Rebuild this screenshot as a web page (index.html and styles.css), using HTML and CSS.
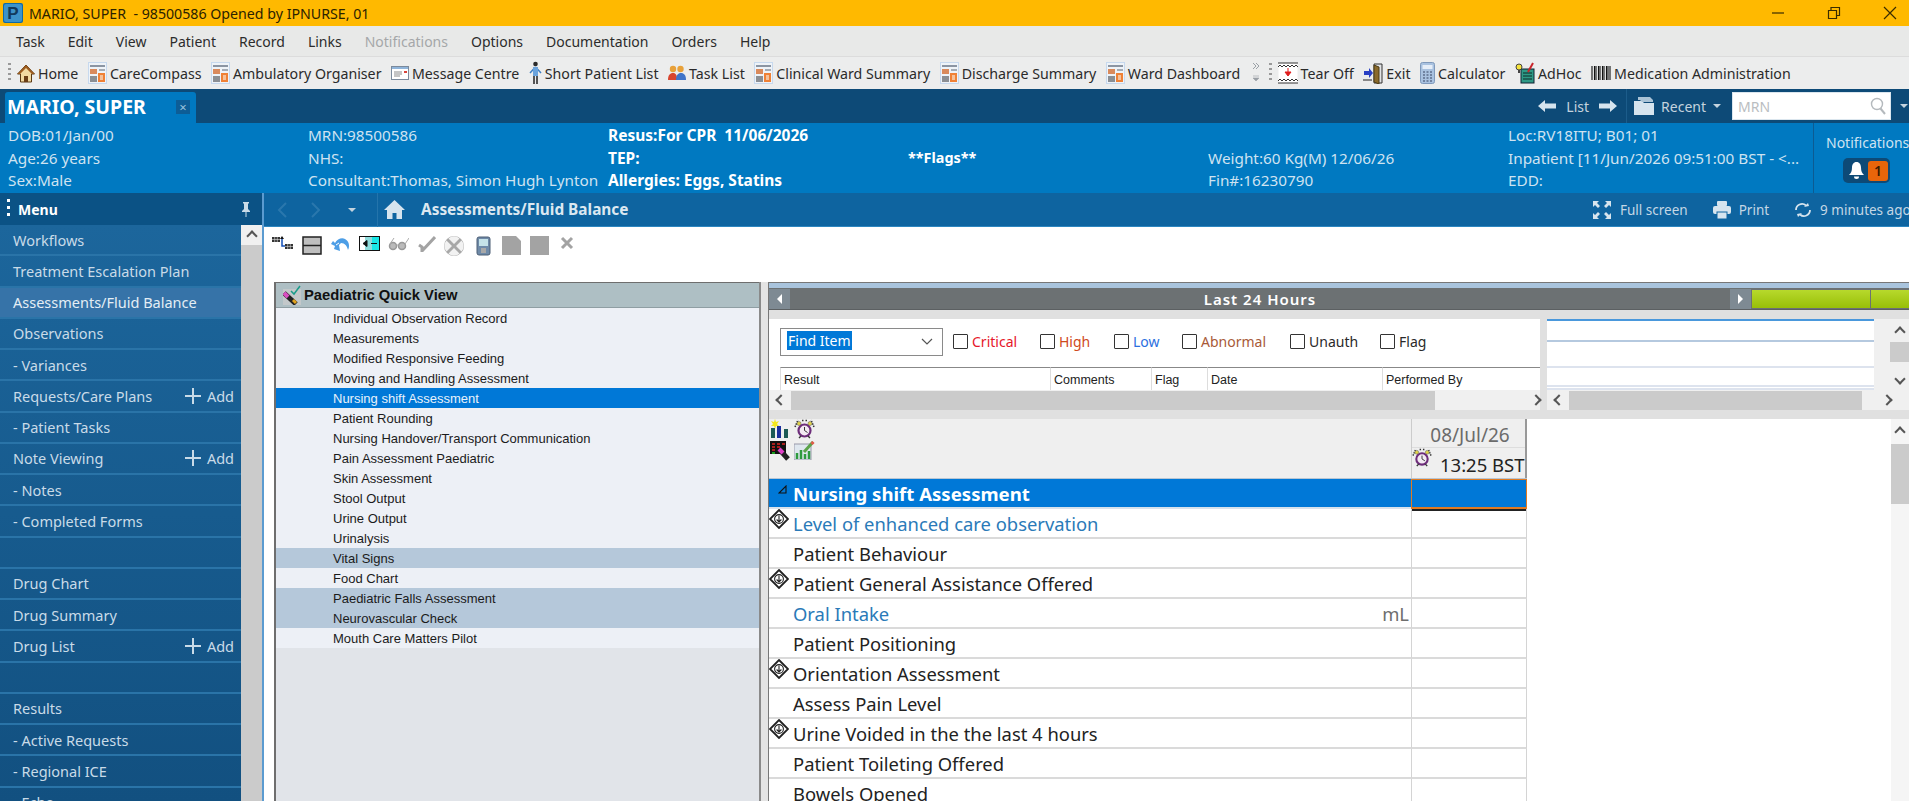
FILE: index.html
```html
<!DOCTYPE html>
<html lang="en">
<head>
  <meta charset="UTF-8" />
  <title>MARIO, SUPER - 98500586</title>
  <link rel="stylesheet" href="styles.css">
</head>
<body>
  <svg class="defs" width="0" height="0">
    <symbol id="report" viewBox="0 0 19 22">
      <rect width="19" height="22" fill="#c7d9ee"/>
      <rect x="1" y="1" width="17" height="20" fill="#eef3f8"/>
      <rect x="2" y="3" width="15" height="2" fill="#8b95a3"/>
      <rect x="2" y="7" width="7" height="5" fill="#d98a5c"/>
      <rect x="11" y="7" width="6" height="2" fill="#a5acb5"/>
      <rect x="2" y="14" width="7" height="6" fill="#8b8f94"/>
      <rect x="10" y="11" width="7" height="9" fill="#ef8136"/>
      <rect x="12" y="13" width="3" height="5" fill="#f4c19b"/>
    </symbol>
    <symbol id="diamond" viewBox="0 0 20 20">
      <path d="M10 1 19 10 10 19 1 10Z" fill="#fff" stroke="#222" stroke-width="1.8"/>
      <circle cx="10" cy="10" r="4.4" fill="none" stroke="#222" stroke-width="1.1"/>
      <path d="M10 6.500v6.500M7.600 10.500 10 13l2.400-2.500" fill="none" stroke="#222" stroke-width="1.100"/>
    </symbol>
    <symbol id="clock" viewBox="0 0 21 20">
      <circle cx="10.500" cy="11.500" r="6" fill="#f3eaf3" stroke="#6d2d7a" stroke-width="2.200"/>
      <path d="M10.500 8v3.500l3 2" fill="none" stroke="#333"/>
      <path d="M1 8 4 1M20 8 17 1M8 1.500h1.500M11.500 1.500H13" stroke="#333" stroke-width="1.500" stroke-dasharray="1.500 1"/>
      <circle cx="5" cy="4.500" r="2" fill="#e2d34a" stroke="#555" stroke-width=".5"/>
      <circle cx="16" cy="4.500" r="2" fill="#e2d34a" stroke="#555" stroke-width=".5"/>
      <path d="M5 19l2-2M16 19l-2-2" stroke="#333" stroke-width="1.400"/>
    </symbol>
    <symbol id="plus" viewBox="0 0 16 18">
      <path d="M8 1v16M0 9h16" stroke="#c9dbe8" stroke-width="2"/>
    </symbol>
  </svg>

  <div class="titlebar">
    <svg class="app-logo" viewBox="0 0 20 20" width="20" height="20">
      <rect width="20" height="20" rx="2" fill="#0d6aa8"/>
      <rect x="1" y="1" width="18" height="18" rx="2" fill="#3d93c9"/>
      <text x="10" y="16" text-anchor="middle" class="app-logo-letter">P</text>
    </svg>
    <span class="title-text">MARIO, SUPER  - 98500586 Opened by IPNURSE, 01</span>
    <div class="window-btns">
      <svg width="14" height="14" viewBox="0 0 14 14"><path d="M1 7h12" stroke="#3a2c00" stroke-width="1.200"/></svg>
      <svg width="14" height="14" viewBox="0 0 14 14"><path d="M1.500 4.500h8v8h-8zM4 4.500v-3h8.500v8h-3" fill="none" stroke="#3a2c00" stroke-width="1.200"/></svg>
      <svg width="14" height="14" viewBox="0 0 14 14"><path d="M1 1l12 12M13 1 1 13" stroke="#3a2c00" stroke-width="1.200"/></svg>
    </div>
  </div>

  <div class="menubar">
    <span>Task</span><span>Edit</span><span>View</span><span>Patient</span><span>Record</span><span>Links</span>
    <span class="disabled">Notifications</span><span>Options</span><span>Documentation</span><span>Orders</span><span>Help</span>
  </div>

  <div class="toolbar">
    <div class="grip"></div>
    <div class="tool">
      <svg width="18" height="19" viewBox="0 0 18 19"><path d="M9 1 0.500 10h3v8h11v-8h3z" fill="#f2d9a0" stroke="#5b3a12"/><path d="M9 1 0.500 10h2.500L9 4l6 6h2.500z" fill="#9c5a1d"/><rect x="7" y="12" width="4" height="6" fill="#6b3f16"/></svg>
      Home
    </div>
    <div class="tool"><svg width="19" height="22"><use href="#report"/></svg>CareCompass</div>
    <div class="tool"><svg width="19" height="22"><use href="#report"/></svg>Ambulatory Organiser</div>
    <div class="tool">
      <svg width="18" height="14" viewBox="0 0 18 14"><rect x=".5" y=".5" width="17" height="13" fill="#fff" stroke="#7b8a9c"/><rect x="1" y="1" width="16" height="2" fill="#8fb4da"/><path d="M3 6h8M3 8h8M3 10h6" stroke="#8b8b8b"/><rect x="13" y="5" width="3" height="2" fill="#d9433a"/></svg>
      Message Centre
    </div>
    <div class="tool">
      <svg width="13" height="24" viewBox="0 0 13 24"><circle cx="6.500" cy="3" r="2.300" fill="#2a2a2a"/><path d="M6.500 6 1 12M6.500 6l5.500 6" stroke="#3d7fc4" stroke-width="1.500"/><path d="M4 6h5v9H4z" fill="#6aa3dc"/><path d="M5 15v8M8 15v8" stroke="#222" stroke-width="1.500"/></svg>
      Short Patient List
    </div>
    <div class="tool">
      <svg width="18" height="16" viewBox="0 0 18 16"><circle cx="5" cy="4" r="3.200" fill="#e8a13a"/><circle cx="12.500" cy="4" r="3.200" fill="#e8a13a"/><path d="M0 15c0-5 2-7 5-7s4 2 4 7z" fill="#d8452f"/><path d="M8 15c0-5 2-7 5-7s5 2 5 7z" fill="#3f74c9"/></svg>
      Task List
    </div>
    <div class="tool"><svg width="19" height="22"><use href="#report"/></svg>Clinical Ward Summary</div>
    <div class="tool"><svg width="19" height="22"><use href="#report"/></svg>Discharge Summary</div>
    <div class="tool"><svg width="19" height="22"><use href="#report"/></svg>Ward Dashboard</div>
    <div class="overflow-chevrons">
      <svg width="8" height="22" viewBox="0 0 8 22"><path d="M1 1l3 3-3 3M4 1l3 3-3 3" fill="none" stroke="#9aa0a6"/><path d="M1 14h6M1 16l3 3 3-3z" fill="#9aa0a6" stroke="#9aa0a6" stroke-width=".6"/></svg>
    </div>
    <div class="grip grip-mid"></div>
    <div class="tool">
      <svg width="20" height="22" viewBox="0 0 20 22"><rect x=".5" y="1" width="19" height="20" fill="#fff"/><path d="M0 1h20M0 5l2-2 2 2 2-2 2 2 2-2 2 2 2-2 2 2 2-2 2 2M0 19l2-2 2 2 2-2 2 2 2-2 2 2 2-2 2 2 2-2 2 2M0 21h20" fill="none" stroke="#333"/><path d="M10 6v6M7 10l3 4 3-4z" fill="#e01c1c" stroke="#e01c1c"/></svg>
      Tear Off
    </div>
    <div class="tool">
      <svg width="20" height="22" viewBox="0 0 20 22"><path d="M11 2h8v19h-8z" fill="#e2e4e6" stroke="#333"/><path d="M11 3l5 2v17l-5-2z" fill="#8a6a2b" stroke="#4a3a14"/><path d="M1 9h5V6l4 5-4 5v-3H1z" fill="#2940c4"/><path d="M0 18h9" stroke="#222"/></svg>
      Exit
    </div>
    <div class="tool">
      <svg width="15" height="22" viewBox="0 0 15 22"><rect x=".5" y=".5" width="14" height="21" rx="2" fill="#a9c2e0" stroke="#7f99bb"/><rect x="2.500" y="3" width="10" height="4" fill="#e6eef8"/><path d="M3 10h2M6.500 10h2M10 10h2M3 13h2M6.500 13h2M10 13h2M3 16h2M6.500 16h2M10 16h2M3 19h2M6.500 19h2M10 19h2" stroke="#5d6f8c" stroke-width="1.600"/></svg>
      Calculator
    </div>
    <div class="tool">
      <svg width="20" height="22" viewBox="0 0 20 22"><rect x="6" y="7" width="13" height="14" fill="#2f9a86" stroke="#123"/><path d="M8 11h9M8 14h9M8 17h9" stroke="#0c2b28"/><circle cx="4" cy="5" r="3" fill="#f5e33c" stroke="#444"/><path d="M3 8h2v3H3z" fill="#444"/><path d="M18 1l-5 9" stroke="#c8252c" stroke-width="2"/></svg>
      AdHoc
    </div>
    <div class="tool">
      <svg width="20" height="14" viewBox="0 0 20 14"><path d="M1 0v14M3.500 0v14M5 0v14M7.500 0v14M9 0v14M11.500 0v14M13 0v14M15.500 0v14M17 0v14M19 0v14" stroke="#111" stroke-width="1.100"/></svg>
      Medication Administration
    </div>
  </div>

  <div class="tabbar">
    <div class="patient-tab">
      <span class="patient-name">MARIO, SUPER</span>
      <span class="tab-close">×</span>
    </div>
    <div class="tab-tools">
      <svg width="18" height="14" viewBox="0 0 18 14"><path d="M0 7l7-6v3.500h11v5H7V13z" fill="#d6e4ee"/></svg>
      <span class="tab-list">List</span>
      <svg width="18" height="14" viewBox="0 0 18 14"><path d="M18 7l-7-6v3.500H0v5h11V13z" fill="#d6e4ee"/></svg>
      <div class="tab-sep"></div>
      <svg width="21" height="20" viewBox="0 0 21 20"><path d="M0 5h8l2 2h10v12H0z" fill="#d6e4ee"/><path d="M4 1h12l3 3v2H8L6 4H4z" fill="#aac3d6"/></svg>
      <span class="tab-recent">Recent</span>
      <span class="caret"></span>
      <div class="search-box">
        <span>MRN</span>
        <svg width="16" height="18" viewBox="0 0 16 18"><circle cx="7" cy="7" r="5.500" fill="none" stroke="#b4b9bd" stroke-width="1.400"/><path d="M10.500 11.500 15 17" stroke="#b4b9bd" stroke-width="2"/></svg>
      </div>
      <span class="caret caret-end"></span>
    </div>
  </div>

  <div class="banner">
    <div class="banner-grid">
      <div>DOB:01/Jan/00</div><div>MRN:98500586</div><div class="strong">Resus:For CPR  11/06/2026</div><div></div><div></div><div>Loc:RV18ITU; B01; 01</div>
      <div>Age:26 years</div><div>NHS:</div><div class="strong">TEP:</div><div class="strong flags">**Flags**</div><div>Weight:60 Kg(M) 12/06/26</div><div>Inpatient [11/Jun/2026 09:51:00 BST - &lt;...</div>
      <div>Sex:Male</div><div>Consultant:Thomas, Simon Hugh Lynton</div><div class="strong">Allergies: Eggs, Statins</div><div></div><div>Fin#:16230790</div><div>EDD:</div>
    </div>
    <div class="notif">
      <span class="notif-label">Notifications</span>
      <div class="notif-badge">
        <svg width="15" height="19" viewBox="0 0 15 19"><path d="M7.500 1c-3 0-4.500 2.500-4.500 5.500 0 4-1 5.500-3 7.500h15c-2-2-3-3.500-3-7.500C12 3.500 10.500 1 7.500 1z" fill="#fff"/><path d="M5 15.500h5a2.500 2.500 0 0 1-5 0z" fill="#fff"/></svg>
        <span class="notif-count">1</span>
      </div>
    </div>
  </div>

  <div class="workspace">
    <aside class="sidebar">
      <div class="side-head">
        <span class="side-dots"></span>
        <span class="side-title">Menu</span>
        <svg width="10" height="16" viewBox="0 0 10 16"><path d="M2 1h6v1L7 3v5l2 2v1H1v-1l2-2V3L2 2zM4.500 11h1v5h-1z" fill="#c9dbe8"/></svg>
      </div>
      <div class="side-body">
        <ul class="side-list">
          <li>Workflows</li>
          <li>Treatment Escalation Plan</li>
          <li class="active">Assessments/Fluid Balance</li>
          <li>Observations</li>
          <li>- Variances</li>
          <li>Requests/Care Plans<span class="add"><svg width="16" height="18"><use href="#plus"/></svg>Add</span></li>
          <li>- Patient Tasks</li>
          <li>Note Viewing<span class="add"><svg width="16" height="18"><use href="#plus"/></svg>Add</span></li>
          <li>- Notes</li>
          <li>- Completed Forms</li>
          <li></li>
          <li>Drug Chart</li>
          <li>Drug Summary</li>
          <li>Drug List<span class="add"><svg width="16" height="18"><use href="#plus"/></svg>Add</span></li>
          <li></li>
          <li>Results</li>
          <li>- Active Requests</li>
          <li>- Regional ICE</li>
          <li>- Echo</li>
        </ul>
        <div class="side-scroll">
          <span class="chev-up"></span>
        </div>
      </div>
    </aside>

    <main class="main">
      <div class="navstrip">
        <svg class="nav-arrow" width="12" height="18" viewBox="0 0 12 18"><path d="M10 2 3 9l7 7" fill="none" stroke="#2a77ad" stroke-width="2"/></svg>
        <svg class="nav-arrow" width="12" height="18" viewBox="0 0 12 18"><path d="M2 2l7 7-7 7" fill="none" stroke="#2a77ad" stroke-width="2"/></svg>
        <span class="caret nav-caret"></span>
        <div class="nav-sep"></div>
        <svg width="21" height="21" viewBox="0 0 21 21"><path d="M10.500 1 0 11h3v9h5.500v-6h4v6H18v-9h3z" fill="#d6e4ee"/></svg>
        <span class="nav-title">Assessments/Fluid Balance</span>
        <div class="nav-right">
          <span class="nav-act">
            <svg width="20" height="20" viewBox="0 0 20 20"><path d="M1 1h6L5 3l3 3-2 2-3-3-2 2zM19 1v6l-2-2-3 3-2-2 3-3-2-2zM1 19v-6l2 2 3-3 2 2-3 3 2 2zM19 19h-6l2-2-3-3 2-2 3 3 2-2z" fill="#d6e4ee"/></svg>
            Full screen
          </span>
          <span class="nav-act">
            <svg width="18" height="18" viewBox="0 0 18 18"><rect x="4" y="0" width="10" height="5" rx="1" fill="#d6e4ee"/><rect x="0" y="5" width="18" height="8" rx="2" fill="#d6e4ee"/><rect x="4" y="11" width="10" height="7" fill="#d6e4ee" stroke="#0e64a0"/></svg>
            Print
          </span>
          <span class="nav-act">
            <svg width="18" height="16" viewBox="0 0 18 16"><path d="M2 8a6 6 0 0 1 10-4.500M16 8a6 6 0 0 1-10 4.500" fill="none" stroke="#d6e4ee" stroke-width="1.800"/><path d="M10 5l5-1-1-3zM8 11l-5 1 1 3z" fill="#d6e4ee"/></svg>
            9 minutes ago
          </span>
        </div>
      </div>

      <div class="content">
        <div class="icon-bar">
          <svg width="21" height="14" viewBox="0 0 21 14"><rect x="0" y="1" width="8" height="5" fill="#333"/><path d="M0 3.500h8M2.700 1v5M5.300 1v5" stroke="#ddd" stroke-width=".6"/><rect x="13" y="8" width="8" height="5" fill="#333"/><path d="M13 10.500h8M15.700 8v5M18.300 8v5" stroke="#ddd" stroke-width=".6"/><path d="M10 3v7h3" fill="none" stroke="#1450b8" stroke-width="1.500"/><path d="M10 0l2 3H8z" fill="#111"/></svg>
          <svg width="20" height="19" viewBox="0 0 20 19"><rect x="1" y="1" width="18" height="17" fill="#bfbfbf" stroke="#222" stroke-width="1.500"/><path d="M1 9.500h18" stroke="#222" stroke-width="1.500"/></svg>
          <svg width="20" height="17" viewBox="0 0 20 17"><path d="M1 8 3 5l2 2c2-4 7-6 10-4 4 2 5 7 3 11-1-4-3-7-7-7L9 9l1 6-6-2 1-3z" fill="#4d9ee6"/><path d="M6 9 9 7" stroke="#fff"/></svg>
          <svg width="21" height="15" viewBox="0 0 21 15"><rect x=".5" y=".5" width="20" height="14" fill="#fff" stroke="#111"/><rect x="6" y="1" width="7" height="13" fill="#8fdcdc"/><rect x="13" y="1" width="7" height="13" fill="#19e6e6"/><path d="M4 7.500l4-3v6zM12 7.500h6" stroke="#111" fill="#111"/></svg>
          <svg width="21" height="15" viewBox="0 0 21 15"><circle cx="5" cy="10" r="3.500" fill="#bbb" stroke="#999" stroke-width="1.500"/><circle cx="14" cy="10" r="3.500" fill="#bbb" stroke="#999" stroke-width="1.500"/><path d="M8.500 9h2M2 8 6 2M17 8l4-6" fill="none" stroke="#aaa"/></svg>
          <svg width="18" height="16" viewBox="0 0 18 16"><path d="M1 9l3 2 0 4 13-14" fill="none" stroke="#a3a3a3" stroke-width="3"/></svg>
          <svg width="20" height="20" viewBox="0 0 20 20"><circle cx="10" cy="10" r="10" fill="#a8a8a8"/><path d="M4.500 2.500 10 8l5.500-5.500A8 8 0 0 0 4.500 2.500zM2.500 4.500 8 10l-5.500 5.500a8 8 0 0 1 0-11zM17.500 4.500 12 10l5.500 5.500a8 8 0 0 0 0-11zM4.500 17.500 10 12l5.500 5.500a8 8 0 0 1-11 0z" fill="#f2f2f2"/></svg>
          <svg class="ib-shift" width="15" height="20" viewBox="0 0 15 20"><rect x="1" y="1" width="13" height="18" rx="2" fill="#6f8aa8" stroke="#4c5f75"/><rect x="3" y="3" width="9" height="7" fill="#c5e2e8"/><rect x="5" y="12" width="5" height="5" fill="#a8a8a8"/></svg>
          <svg class="ib-shift" width="19" height="19" viewBox="0 0 19 19"><path d="M0 0h14l5 5v14H0z" fill="#a3a3a3"/></svg>
          <svg width="19" height="19" viewBox="0 0 19 19"><rect width="19" height="19" fill="#a3a3a3"/></svg>
          <svg class="ib-shift" width="14" height="14" viewBox="0 0 14 14"><path d="M2 2l10 10M12 2 2 12" stroke="#a3a3a3" stroke-width="3"/></svg>
        </div>

        <div class="panes">
          <section class="quick">
            <div class="quick-head">
              <svg width="18" height="20" viewBox="0 0 18 20"><rect y="4" width="18" height="16" fill="#c3c8ca"/><path d="M1 8l12 11" stroke="#222" stroke-width="5"/><path d="M1 8l4 4" stroke="#d84ec0" stroke-width="4"/><path d="M10 15l3 3" stroke="#e0a21e" stroke-width="3"/><path d="M8 6l3 3 6-8" fill="none" stroke="#1a9c8a" stroke-width="1.500"/></svg>
              Paediatric Quick View
            </div>
            <ul class="quick-list">
              <li>Individual Observation Record</li>
              <li>Measurements</li>
              <li>Modified Responsive Feeding</li>
              <li>Moving and Handling Assessment</li>
              <li class="selected">Nursing shift Assessment</li>
              <li>Patient Rounding</li>
              <li>Nursing Handover/Transport Communication</li>
              <li>Pain Assessment Paediatric</li>
              <li>Skin Assessment</li>
              <li>Stool Output</li>
              <li>Urine Output</li>
              <li>Urinalysis</li>
              <li class="shaded">Vital Signs</li>
              <li>Food Chart</li>
              <li class="shaded">Paediatric Falls Assessment</li>
              <li class="shaded">Neurovascular Check</li>
              <li>Mouth Care Matters Pilot</li>
            </ul>
          </section>

          <div class="splitter"></div>

          <section class="flow">
            <div class="flow-strip"></div>
            <div class="range-bar">
              <span class="range-btn"><span class="tri-left"></span></span>
              <span class="range-title">Last 24 Hours</span>
              <span class="range-btn"><span class="tri-right"></span></span>
              <span class="range-green green-a"></span>
              <span class="range-green green-b"></span>
            </div>

            <div class="results">
              <div class="results-left">
                <div class="filter-row">
                  <div class="find-combo">
                    <span class="find-text">Find Item</span>
                    <svg width="12" height="8" viewBox="0 0 12 8"><path d="M1 1l5 5 5-5" fill="none" stroke="#555" stroke-width="1.200"/></svg>
                  </div>
                  <label class="check c-critical"><i></i>Critical</label>
                  <label class="check c-high"><i></i>High</label>
                  <label class="check c-low"><i></i>Low</label>
                  <label class="check c-abnormal"><i></i>Abnormal</label>
                  <label class="check c-unauth"><i></i>Unauth</label>
                  <label class="check c-flag"><i></i>Flag</label>
                </div>
                <div class="result-head">
                  <span>Result</span>
                  <span>Comments</span>
                  <span>Flag</span>
                  <span>Date</span>
                  <span>Performed By</span>
                </div>
                <div class="hscroll">
                  <span class="chev-left"></span>
                  <span class="thumb thumb-a"></span>
                  <span class="chev-right"></span>
                </div>
              </div>
              <div class="results-right">
                <div class="mini-wrap">
                  <div class="mini-lines">
                    <div class="line-blue"></div>
                    <div class="line-b"></div>
                    <div class="line-c"></div>
                    <div class="line-d"></div>
                  </div>
                  <div class="mini-gutter"></div>
                  <div class="vscroll">
                    <span class="chev-up"></span>
                    <span class="vthumb"></span>
                    <span class="chev-down"></span>
                  </div>
                </div>
                <div class="hscroll">
                  <span class="chev-left"></span>
                  <span class="thumb thumb-b"></span>
                  <span class="chev-right"></span>
                </div>
              </div>
            </div>

            <div class="band"></div>

            <div class="grid-wrap">
              <div class="grid">
                <div class="grid-head">
                  <div class="head-icons">
                    <svg width="20" height="20" viewBox="0 0 20 20"><path d="M5 0l1 3 3-1-2 3 2 2-3 0-1 3-1-3-3 0 2-2-2-3 3 1z" fill="#f4e81c"/><rect x="1" y="9" width="4" height="10" fill="#1d5a55"/><rect x="7" y="7" width="4" height="12" fill="#1b2f9c"/><rect x="14" y="10" width="4" height="9" fill="#1d5a55"/></svg>
                    <svg width="21" height="20"><use href="#clock"/></svg>
                    <svg width="20" height="20" viewBox="0 0 20 20"><rect width="16" height="13" fill="#111"/><path d="M2 3h3M7 3h3M12 3h3M2 6h3M7 6h3M2 9h3" stroke="#d22" stroke-width="1.500"/><path d="M2 12h3" stroke="#2c2" stroke-width="1.500"/><path d="M9 8l9 10" stroke="#222" stroke-width="5"/><path d="M9 8l4 4" stroke="#e040c8" stroke-width="4"/></svg>
                    <svg width="21" height="19" viewBox="0 0 21 19"><rect y="3" width="17" height="16" fill="#dfe7ef" stroke="#99a"/><path d="M3 18v-6M7 18v-9M11 18v-5M15 18v-8" stroke="#2e9b3e" stroke-width="2.500"/><path d="M10 11 19 1" stroke="#5ba34a" stroke-width="3"/><path d="M17.500 3l2-2" stroke="#e35a4a" stroke-width="3"/></svg>
                  </div>
                  <div class="head-dates">
                    <div class="head-day">08/Jul/26</div>
                    <div class="head-time">
                      <svg width="20" height="19"><use href="#clock"/></svg>
                      <span>13:25 BST</span>
                    </div>
                  </div>
                </div>
                <div class="grid-row section">
                  <div class="row-name">
                    <span class="slot"><svg width="9" height="9" viewBox="0 0 9 9"><path d="M8 1v7H1z" fill="none" stroke="#111" stroke-width="1.100"/></svg></span>
                    Nursing shift Assessment
                  </div>
                  <div class="row-cell"></div>
                </div>
                <div class="grid-row"><div class="row-name link"><span class="slot"><svg width="20" height="20"><use href="#diamond"/></svg></span>Level of enhanced care observation</div><div class="row-cell"></div></div>
                <div class="grid-row"><div class="row-name"><span class="slot"></span>Patient Behaviour</div><div class="row-cell"></div></div>
                <div class="grid-row"><div class="row-name"><span class="slot"><svg width="20" height="20"><use href="#diamond"/></svg></span>Patient General Assistance Offered</div><div class="row-cell"></div></div>
                <div class="grid-row"><div class="row-name link"><span class="slot"></span>Oral Intake<span class="unit">mL</span></div><div class="row-cell"></div></div>
                <div class="grid-row"><div class="row-name"><span class="slot"></span>Patient Positioning</div><div class="row-cell"></div></div>
                <div class="grid-row"><div class="row-name"><span class="slot"><svg width="20" height="20"><use href="#diamond"/></svg></span>Orientation Assessment</div><div class="row-cell"></div></div>
                <div class="grid-row"><div class="row-name"><span class="slot"></span>Assess Pain Level</div><div class="row-cell"></div></div>
                <div class="grid-row"><div class="row-name"><span class="slot"><svg width="20" height="20"><use href="#diamond"/></svg></span>Urine Voided in the the last 4 hours</div><div class="row-cell"></div></div>
                <div class="grid-row"><div class="row-name"><span class="slot"></span>Patient Toileting Offered</div><div class="row-cell"></div></div>
                <div class="grid-row"><div class="row-name"><span class="slot"></span>Bowels Opened</div><div class="row-cell"></div></div>
              </div>
              <div class="grid-blank"></div>
              <div class="grid-scroll">
                <span class="chev-up"></span>
                <span class="grid-thumb"></span>
              </div>
            </div>
          </section>
        </div>
      </div>
    </main>
  </div>
</body>
</html>
```

FILE: styles.css
```css
html, body {
  margin: 0;
  padding: 0;
  height: 801px;
  overflow: hidden;
  background: #fff;
  font-family: "Noto Sans", "Open Sans", sans-serif;
  font-size: 14px;
  color: #222;
}
ul { list-style: none; margin: 0; padding: 0; }
svg { flex: none; display: block; }
.defs { position: absolute; }

/* title + menus */
.titlebar {
  height: 26px;
  background: #ffb900;
  display: flex;
  align-items: center;
  padding-left: 3px;
}
.app-logo-letter { font: bold 17px "Liberation Sans", sans-serif; fill: #123a5c; }
.title-text { margin-left: 6px; font-size: 14.2px; color: #2b2200; white-space: pre; }
.window-btns { margin-left: auto; display: flex; gap: 42px; padding-right: 12px; }

.menubar {
  height: 30px;
  background: #e8e9e8;
  border-bottom: 1px solid #dcdcdc;
  display: flex;
  align-items: center;
  gap: 23px;
  padding: 1px 0 0 16px;
  box-sizing: content-box;
  height: 29px;
  font-size: 14px;
  color: #2c2c2c;
}
.menubar .disabled { color: #a5a7a9; }

.toolbar {
  height: 32px;
  background: #eceded;
  display: flex;
  align-items: center;
  padding-left: 8px;
  font-size: 14.2px;
  color: #2a2a2a;
  white-space: nowrap;
}
.grip {
  width: 3px;
  height: 20px;
  margin-right: 6px;
  background: repeating-linear-gradient(#999 0 2px, transparent 2px 5px);
}
.tool { display: flex; align-items: center; gap: 3px; margin-right: 9.5px; }
.overflow-chevrons { margin: 0 9px 0 2px; }
.grip-mid { margin: 0 6px 0 0; }

/* patient tab */
.tabbar {
  height: 34px;
  background: #0d4a77;
  display: flex;
  justify-content: space-between;
}
.patient-tab {
  width: 191px;
  margin: 3px 0 0 5px;
  background: #0079c1;
  border-radius: 3px 3px 0 0;
  display: flex;
  align-items: center;
  justify-content: space-between;
  padding: 0 6px 2px 2px;
  box-sizing: border-box;
}
.patient-name { color: #fff; font-weight: 700; font-size: 19.5px; line-height: 26px; }
.tab-close {
  width: 14px;
  height: 14px;
  background: #0d5d96;
  color: #9cc3de;
  font-size: 13px;
  line-height: 14px;
  text-align: center;
}
.tab-tools { display: flex; align-items: center; color: #c4d3de; font-size: 14px; }
.tab-list { margin: 0 10px; }
.tab-sep { width: 1px; height: 34px; background: #1c5c8a; margin: 0 7px 0 9px; }
.tab-recent { margin: 0 7px 0 6px; }
.caret {
  width: 0;
  height: 0;
  border-left: 4px solid transparent;
  border-right: 4px solid transparent;
  border-top: 4px solid #c4d3de;
}
.search-box {
  width: 159px;
  height: 28px;
  margin-left: 11px;
  box-sizing: border-box;
  background: #fff;
  border: 1px solid #dbe6ee;
  display: flex;
  align-items: center;
  justify-content: space-between;
  padding: 0 4px 0 5px;
  color: #b9bdc1;
  font-size: 14px;
}
.caret-end { margin: 0 1px 0 9px; }

/* banner */
.banner {
  height: 70px;
  background: #0079c1;
  display: flex;
  color: #cfe3f1;
  font-size: 15.3px;
}
.banner-grid {
  display: grid;
  grid-template-columns: repeat(6, 300px);
  grid-auto-rows: 22.5px;
  padding: 1px 0 0 8px;
  line-height: 22.5px;
  white-space: pre;
}
.banner-grid .strong { color: #fff; font-weight: 700; font-size: 15.5px; }
.banner-grid .flags { font-size: 14.4px; }
.notif {
  margin-left: 5px;
  flex: 1;
  overflow: hidden;
  border-left: 1px solid #0c5b92;
  display: flex;
  flex-direction: column;
  align-items: flex-start;
  padding: 10px 0 0 12px;
}
.notif-label { white-space: nowrap; font-size: 14px; }
.notif-badge {
  margin: 6px 0 0 17px;
  width: 47px;
  height: 25px;
  box-sizing: border-box;
  background: #0d4a77;
  border-radius: 5px;
  display: flex;
  align-items: center;
  justify-content: flex-end;
  gap: 4px;
  padding-right: 2px;
  flex: none;
}
.notif-count {
  width: 20px;
  height: 20px;
  background: #e8650a;
  border-radius: 3px;
  color: #3b1a00;
  font-size: 14px;
  font-weight: 600;
  line-height: 20px;
  text-align: center;
}

/* sidebar */
.workspace { display: flex; height: 608px; overflow: hidden; }
.sidebar {
  width: 262px;
  flex: none;
  border-right: 2px solid #5b9bd0;
}
.side-head {
  height: 32px;
  background: #0b5285;
  display: flex;
  align-items: center;
  padding: 0 11px 0 7px;
  color: #fff;
}
.side-dots {
  width: 3px;
  height: 20px;
  background: repeating-linear-gradient(#fff 0 3px, transparent 3px 7px);
}
.side-title { margin-left: 8px; font-weight: 700; font-size: 14px; flex: 1; }
.side-body { display: flex; height: 576px; overflow: hidden; }
.side-list {
  flex: 1;
  background: linear-gradient(#1c669c, #125080);
  color: #c9dbe8;
  font-size: 14.5px;
}
.side-list li {
  height: 31.25px;
  box-sizing: border-box;
  border-bottom: 2px solid #2a74a8;
  display: flex;
  align-items: center;
  justify-content: space-between;
  padding: 0 7px 0 13px;
}
.side-list li.active { background: #3673a8; color: #e4eef5; }
.add { display: flex; align-items: center; gap: 6px; color: #c9dbe8; }
.side-scroll {
  width: 21px;
  background: linear-gradient(#f0f0f0 20px, #cbcbcb 20px);
  display: flex;
  justify-content: center;
  padding-top: 7px;
  box-sizing: border-box;
}
.chev-up, .chev-down, .chev-left, .chev-right {
  display: block;
  width: 6px;
  height: 6px;
  border: solid #555;
  border-width: 2px 0 0 2px;
  flex: none;
}
.chev-up { transform: rotate(45deg); }
.chev-down { transform: rotate(225deg); }
.chev-left { transform: rotate(-45deg); }
.chev-right { transform: rotate(135deg); }

/* nav strip */
.main { flex: 1; min-width: 0; display: flex; flex-direction: column; }
.navstrip {
  height: 34px;
  flex: none;
  background: #0e64a0;
  border-bottom: 1px solid #2c86c0;
  box-sizing: border-box;
  display: flex;
  align-items: center;
  color: #c4d7e5;
  white-space: nowrap;
}
.nav-arrow { margin-left: 12px; }
.nav-arrow + .nav-arrow { margin-left: 22px; }
.nav-caret { margin-left: 26px; }
.nav-sep { width: 1px; height: 34px; background: #2474ab; margin: 0 6px 0 21px; }
.nav-title { margin-left: 16px; font-weight: 700; font-size: 15.4px; color: #dce8f1; }
.nav-right {
  margin-left: auto;
  width: 317px;
  overflow: hidden;
  display: flex;
  gap: 25px;
  font-size: 13.5px;
  flex: none;
}
.nav-act { display: flex; align-items: center; gap: 8px; }

.content { flex: 1; min-height: 0; display: flex; flex-direction: column; }
.icon-bar {
  height: 55px;
  flex: none;
  box-sizing: border-box;
  padding: 9px 0 0 8px;
  display: flex;
  align-items: flex-start;
  gap: 8.5px;
}
.ib-shift { margin-left: 3px; }
.panes { flex: 1; min-height: 0; display: flex; padding-left: 10px; }

/* quick view */
.quick {
  width: 485px;
  flex: none;
  box-sizing: border-box;
  border: solid #6e6e6e;
  border-width: 1px 0 0 2px;
  background: #e1e4e9;
}
.quick-head {
  height: 25px;
  box-sizing: border-box;
  background: #aebfc4;
  border-bottom: 1px solid #8f9ea3;
  display: flex;
  align-items: center;
  gap: 3px;
  padding-left: 7px;
  font: bold 14.8px "Liberation Sans", sans-serif;
  color: #111;
}
.quick-list { font: 13px/21px "Liberation Sans", sans-serif; color: #1b1b1b; }
.quick-list li { height: 20px; background: #edf0f6; padding-left: 57px; }
.quick-list .selected { background: #0078d7; color: #e8f2fb; }
.quick-list .shaded { background: #b5c8da; }

.splitter {
  width: 10px;
  flex: none;
  box-sizing: border-box;
  background: #e4e4e4;
  border-left: 2px solid #8a8a8a;
  border-right: 1px solid #777;
}

/* flowsheet */
.flow { flex: 1; min-width: 0; display: flex; flex-direction: column; }
.flow-strip {
  height: 6px;
  flex: none;
  box-sizing: border-box;
  border-top: 1px solid #777;
  background: #a9c4dd;
}
.range-bar {
  height: 22px;
  flex: none;
  background: #6c7173;
  border-bottom: 1px solid #5c6062;
  box-sizing: border-box;
  display: flex;
  align-items: center;
  color: #fff;
  font-size: 15px;
  font-weight: 600;
  letter-spacing: 1px;
}
.range-btn {
  width: 21px;
  height: 20px;
  background: #7e8a93;
  display: flex;
  align-items: center;
  justify-content: center;
  flex: none;
}
.tri-left, .tri-right { width: 0; height: 0; border: 5px solid transparent; }
.tri-left { border-right: 5px solid #fff; margin-left: -5px; }
.tri-right { border-left: 5px solid #fff; margin-right: -5px; }
.range-title { flex: 1; text-align: center; }
.range-green {
  height: 18px;
  margin-left: 1px;
  background: linear-gradient(#b7d92c, #98bf08);
  flex: none;
}
.green-a { width: 118px; }
.green-b { width: 38px; }

.results {
  height: 100px;
  flex: none;
  box-sizing: border-box;
  background: #e0e0e0;
  padding-top: 9px;
  display: flex;
  gap: 7px;
}
.results-left { width: 771px; flex: none; display: flex; flex-direction: column; }
.filter-row {
  height: 48px;
  flex: none;
  background: #fff;
  box-sizing: border-box;
  padding: 9px 0 0 11px;
  display: flex;
  font-size: 14px;
}
.find-combo {
  width: 163px;
  height: 28px;
  box-sizing: border-box;
  border: 1px solid #8a8a8a;
  display: flex;
  align-items: center;
  justify-content: space-between;
  padding: 0 9px 0 6px;
}
.find-text { background: #0078d7; color: #fff; padding: 0 1px; line-height: 19px; margin-top: -3px; }
.check { display: flex; align-items: center; gap: 4px; height: 26px; box-sizing: border-box; }
.check i {
  width: 15px;
  height: 15px;
  box-sizing: border-box;
  border: 1px solid #333;
  background: #fff;
  display: block;
  border-radius: 1px;
}
.c-critical { color: #e6162a; margin-left: 10px; width: 87px; }
.c-high { color: #cf4a1c; width: 74px; }
.c-low { color: #2c6fe0; width: 68px; }
.c-abnormal { color: #a85a38; width: 108px; }
.c-unauth { color: #2a2a2a; width: 90px; }
.c-flag { color: #2a2a2a; }

.result-head {
  height: 23px;
  flex: none;
  background: #fff;
  display: grid;
  grid-template-columns: 270px 101px 56px 175px 1fr;
  padding-left: 11px;
  font: 12.5px/24px "Liberation Sans", sans-serif;
  color: #222;
}
.result-head span {
  border-top: 1px solid #888;
  border-left: 1px solid #ddd;
  padding-left: 3px;
  box-sizing: border-box;
  overflow: hidden;
}
.hscroll {
  height: 20px;
  flex: none;
  background: #f0f0f0;
  display: flex;
  align-items: center;
}
.hscroll .chev-left { margin-left: 8px; }
.hscroll .chev-right { margin-left: 7px; }
.thumb { height: 19px; background: #cbcbcb; margin-left: 6px; }
.thumb-a { width: 649px; margin-right: 90px; }
.thumb-b { width: 293px; margin-right: 14px; }

.results-right { flex: 1; min-width: 0; display: flex; flex-direction: column; }
.mini-wrap { height: 71px; flex: none; display: flex; background: #f0f0f0; }
.mini-lines { width: 327px; flex: none; background: #fff; box-sizing: border-box; }
.line-blue { height: 2px; background: #4a98dc; margin-bottom: 19px; }
.line-b { height: 2px; background: #b5c9df; margin-bottom: 24px; }
.line-c { height: 2px; background: #dde3ee; margin-bottom: 17px; }
.line-d { height: 2px; background: #dde3ee; box-shadow: 0 3px 0 #dde3ee; }
.mini-gutter { width: 16px; flex: none; }
.vscroll {
  flex: 1;
  display: flex;
  flex-direction: column;
  align-items: center;
}
.vscroll .chev-up { margin-top: 9px; }
.vthumb { width: 100%; height: 20px; background: #cbcbcb; margin-top: 6px; }
.vscroll .chev-down { margin-top: 13px; }

.band { height: 9px; flex: none; background: #e0e0e0; }

/* grid */
.grid-wrap { flex: 1; min-height: 0; display: flex; overflow: hidden; }
.grid { width: 758px; flex: none; }
.grid-blank { flex: 1; }
.grid-scroll {
  width: 18px;
  flex: none;
  display: flex;
  flex-direction: column;
  align-items: center;
  background: #f5f5f5;
}
.grid-scroll .chev-up { margin-top: 9px; }
.grid-thumb { width: 100%; height: 60px; margin-top: 8px; background: #cbcbcb; }

.grid-head {
  height: 60px;
  box-sizing: border-box;
  display: flex;
  background: #efefef;
  border-bottom: 1px solid #b8c6d4;
}
.head-icons {
  width: 642px;
  flex: none;
  display: grid;
  grid-template-columns: 24px 24px;
  grid-auto-rows: 22px;
  align-content: start;
  padding-left: 1px;
  box-sizing: border-box;
}
.head-dates {
  flex: 1;
  border-left: 1px solid #ccc;
  border-right: 2px solid #999;
  display: flex;
  flex-direction: column;
  color: #222;
  min-width: 0;
  overflow: hidden;
}
.head-day {
  height: 29px;
  box-sizing: border-box;
  border-bottom: 1px solid #ddd;
  color: #6b6b6b;
  font-size: 19px;
  line-height: 33px;
  text-align: center;
  padding-left: 3px;
}
.head-time { display: flex; gap: 8px; font-size: 18.5px; white-space: nowrap; line-height: 33px; }
.grid-row {
  height: 30px;
  display: flex;
  box-sizing: border-box;
  font-size: 18.4px;
}
.row-name {
  width: 642px;
  flex: none;
  box-sizing: border-box;
  border-bottom: 2px solid #dadada;
  display: flex;
  align-items: center;
  padding-right: 2px;
  color: #222;
  white-space: nowrap;
}
.row-name.link { color: #2a7ab8; }
.slot { width: 24px; flex: none; align-self: flex-start; }
.unit { margin-left: auto; color: #6e6e6e; }
.row-cell {
  flex: 1;
  box-sizing: border-box;
  border-left: 1px solid #d4d4d4;
  border-right: 1px solid #d4d4d4;
  border-bottom: 2px solid #dadada;
}
.section .row-name {
  background: #0078d7;
  color: #fff;
  font-weight: 700;
  font-size: 18.6px;
  border-bottom: 2px solid #d8e2ec;
}
.section .slot { padding: 6px 0 0 9px; box-sizing: border-box; }
.section .row-cell {
  background: #0078d7;
  border: 1px solid #e07a22;
  border-bottom: 2px solid #e07a22;
  box-shadow: 0 2px 0 #222;
}
```
